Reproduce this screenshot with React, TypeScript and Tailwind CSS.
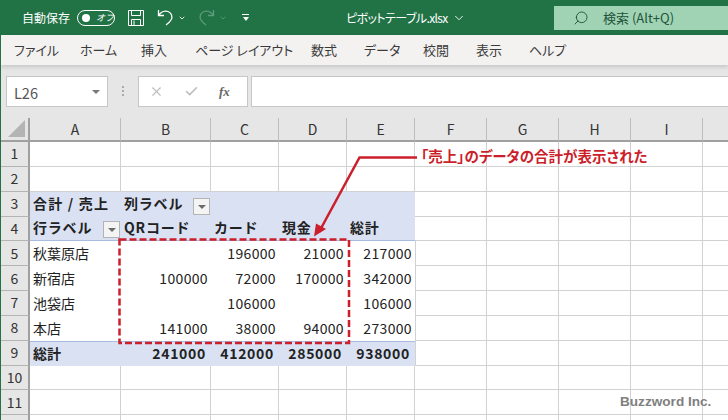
import { ChevronDown, Search, X, Check } from "lucide-react";

const FONT = "font-['Noto_Sans_CJK_JP','Noto_Sans',sans-serif]";

const COLUMNS = ["A", "B", "C", "D", "E", "F", "G", "H", "I", ""];
const TABS = [
  { label: "ファイル", width: "w-[66px]" },
  { label: "ホーム", width: "w-[61px]" },
  { label: "挿入", width: "w-[54px]" },
  { label: "ページ レイアウト", width: "w-[116px]" },
  { label: "数式", width: "w-[53px]" },
  { label: "データ", width: "w-[59px]" },
  { label: "校閲", width: "w-[53px]" },
  { label: "表示", width: "w-[53px]" },
  { label: "ヘルプ", width: "w-[50px]" },
];

type Row = { a?: string; values?: string[]; kind?: "plain" | "head" | "total" };

const ROWS: Row[] = [
  {},
  {},
  { kind: "head" },
  { kind: "head" },
  { a: "秋葉原店", values: ["", "196000", "21000", "217000"], kind: "plain" },
  { a: "新宿店", values: ["100000", "72000", "170000", "342000"], kind: "plain" },
  { a: "池袋店", values: ["", "106000", "", "106000"], kind: "plain" },
  { a: "本店", values: ["141000", "38000", "94000", "273000"], kind: "plain" },
  { a: "総計", values: ["241000", "412000", "285000", "938000"], kind: "total" },
  {},
  {},
  {},
];

function FilterButton() {
  return (
    <span className="mr-px flex h-[17px] w-[17px] shrink-0 items-center justify-center self-end border border-[#b4b4b4] bg-[#f4f4f4]">
      <span className="mt-px h-0 w-0 border-x-[4px] border-t-[4px] border-x-transparent border-t-[#6a6a6a]" />
    </span>
  );
}

function TitleBar() {
  return (
    <header className="flex h-[35px] shrink-0 items-center bg-[#217346] text-white">
      <span className="ml-[21px] text-[12px]">自動保存</span>
      <span className="ml-[7px] flex h-[16px] w-[38px] items-center rounded-full border border-white pl-[4px]">
        <span className="h-[8px] w-[8px] rounded-full bg-white" />
        <span className="ml-[6px] text-[9px] italic leading-none">オフ</span>
      </span>
      <svg className="ml-[13px]" width="16" height="16" viewBox="0 0 16 16" fill="none" stroke="#fff" strokeWidth="1">
        <path d="M.5.5h15v15H.5zM3.500.5v5h9v-5M3.500 15.500v-6h9v6M6 10.500v5" />
      </svg>
      <svg className="ml-[13px]" width="17" height="17" viewBox="0 0 17 17" fill="none" stroke="#fff" strokeWidth="1.300">
        <path d="M1.500 1v5.500H7M1.800 6.200C4 2.500 8 1.500 11 2.500c3.500 1.200 5 5.500 3 8.500-1 1.700-3 3.500-5 5" />
      </svg>
      <ChevronDown className="ml-[4px]" size={8} strokeWidth={2.5} />
      <svg className="ml-[12px]" width="17" height="17" viewBox="0 0 17 17" fill="none" stroke="#5d9c7b" strokeWidth="1.300">
        <path d="M15.500 1v5.500H10M15.200 6.200C13 2.500 9 1.500 6 2.500 2.500 3.700 1 8 3 11c1 1.700 3 3.500 5 5" />
      </svg>
      <ChevronDown className="ml-[4px] text-[#5d9c7b]" size={8} strokeWidth={2.5} />
      <span className="ml-[15px] flex flex-col items-center gap-[2px]">
        <span className="h-px w-[7px] bg-white" />
        <span className="h-0 w-0 border-x-[3.500px] border-t-[4px] border-x-transparent border-t-white" />
      </span>
      <div className="ml-[97px] flex w-[208px] items-center">
        <span className="whitespace-nowrap text-[12px] tracking-[-0.6px] [font-feature-settings:'palt']">ピボットテーブル.xlsx</span>
        <ChevronDown className="ml-[4px]" size={14} strokeWidth={1.5} />
      </div>
      <div className="mt-[6px] flex h-[24px] flex-1 items-center self-start bg-[#9fd3b3] pl-[19px] text-[#23543a]">
        <Search className="-scale-x-100" size={16} strokeWidth={1.4} />
        <span className="ml-[14px] text-[13px]">検索 (Alt+Q)</span>
      </div>
    </header>
  );
}

function MenuBar() {
  return (
    <nav className="relative flex h-[30px] shrink-0 items-center bg-[#f3f2f1] pl-[13px] text-[13px] text-[#3b3b3b] shadow-[0_2px_4px_rgba(0,0,0,0.14)] [font-feature-settings:'palt']">
      {TABS.map((tab) => (
        <span key={tab.label} className={`${tab.width} whitespace-nowrap`}>
          {tab.label}
        </span>
      ))}
    </nav>
  );
}

function FormulaBar() {
  return (
    <div className="flex h-[53px] shrink-0 items-start bg-[#e6e6e6] pt-[11px]">
      <div className="ml-[5px] flex h-[31px] w-[102px] items-center justify-between border border-[#c6c6c6] bg-white pl-[7px] pr-[7px] text-[14.500px] text-[#555]">
        <span className="mt-[3px]">L26</span>
        <span className="h-0 w-0 border-x-[4px] border-t-[4px] border-x-transparent border-t-[#777]" />
      </div>
      <div className="ml-[14px] mr-[14px] mt-[10px] flex flex-col gap-[2px]">
        <span className="h-[2px] w-[2px] bg-[#aaa]" />
        <span className="h-[2px] w-[2px] bg-[#aaa]" />
        <span className="h-[2px] w-[2px] bg-[#aaa]" />
      </div>
      <div className="flex h-[31px] w-[110px] items-center border border-[#c6c6c6] bg-white pl-[10px] text-[#bdbdbd]">
        <X size={15} strokeWidth={1.8} />
        <Check className="ml-[20px]" size={15} strokeWidth={2.5} />
        <span className="ml-[20px] font-['Liberation_Serif',serif] text-[13px] font-bold italic text-[#666]">fx</span>
      </div>
      <div className="ml-[3px] h-[31px] flex-1 border border-r-0 border-[#c6c6c6] bg-white" />
    </div>
  );
}

function Sheet() {
  return (
    <div className="grid flex-1 grid-cols-[29px_91px_90px_68px_68px_68px_72px_72px_72px_72px_26px] grid-rows-[24px_repeat(12,24.850px)] overflow-hidden bg-white text-[14px] text-[#222]">
      <div className="flex items-end justify-end border-b-2 border-r-2 border-[#a0a0a0] bg-[#e6e6e6] p-[3px]">
        <span className="h-0 w-0 border-b-[17px] border-l-[17px] border-b-[#b4b4b4] border-l-transparent" />
      </div>
      {COLUMNS.map((col, i) => (
        <div key={i} className="flex items-center justify-center border-b-2 border-r border-b-[#a0a0a0] border-r-[#bdbdbd] bg-[#e6e6e6] text-[#333]">
          {col}
        </div>
      ))}
      {ROWS.map((row, r) => (
        <SheetRow key={r} row={row} n={r + 1} />
      ))}
    </div>
  );
}

const HEAD_CELL = "flex items-center justify-between whitespace-nowrap bg-[#d9e1f2] pl-[3px] pb-[2px] font-bold tracking-[0.8px]";

function SheetRow({ row, n }: { row: Row; n: number }) {
  const blank = "border-b border-r border-[#d2d2d2]";
  const rest = [0, 1, 2, 3, 4].map((i) => <div key={i} className={blank} />);
  const header = (
    <div className="flex items-center justify-center border-b border-r-2 border-b-[#b4b4b4] border-r-[#a0a0a0] bg-[#e6e6e6] text-[#333]">
      {n < 12 ? n : ""}
    </div>
  );

  if (n === 3 || n === 4) {
    const line = n === 4 ? "border-b border-[#a9bce0]" : "";
    return (
      <>
        {header}
        {n === 3 ? (
          <>
            <div className={`${HEAD_CELL} ${line}`}>
              <span className="tracking-[1.2px]">合計 / 売上</span>
            </div>
            <div className={`${HEAD_CELL} ${line}`}>
              列ラベル
              <FilterButton />
            </div>
            <div className={`${HEAD_CELL} ${line}`} />
            <div className={`${HEAD_CELL} ${line}`} />
            <div className={`${HEAD_CELL} ${line}`} />
          </>
        ) : (
          <>
            <div className={`${HEAD_CELL} ${line}`}>
              行ラベル
              <FilterButton />
            </div>
            <div className={`${HEAD_CELL} ${line}`}>QRコード</div>
            <div className={`${HEAD_CELL} ${line}`}>カード</div>
            <div className={`${HEAD_CELL} ${line}`}>現金</div>
            <div className={`${HEAD_CELL} ${line}`}>総計</div>
          </>
        )}
        {rest}
      </>
    );
  }

  if (row.kind === "plain" || row.kind === "total") {
    const total = row.kind === "total";
    const cell = total ? "bg-[#d9e1f2] border-t border-[#a9bce0] font-bold" : "";
    const num = total ? "pr-[5px] tracking-[0.7px]" : "pr-[3px] tracking-[0.35px]";
    return (
      <>
        {header}
        <div className={`flex items-center pl-[3px] ${cell}`}>{row.a}</div>
        {row.values?.map((v, i) => (
          <div key={i} className={`flex items-center justify-end ${num} ${cell}`}>
            {v}
          </div>
        ))}
        <div className="border-b border-l border-r border-[#d2d2d2]" />
        {rest.slice(1)}
      </>
    );
  }

  return (
    <>
      {header}
      <div className={blank} />
      <div className={blank} />
      <div className={blank} />
      <div className={blank} />
      <div className={blank} />
      {rest}
    </>
  );
}

function Annotation() {
  return (
    <>
      <svg className="absolute left-0 top-0" width="728" height="420" fill="none">
        <rect x="118.500" y="239.500" width="229.500" height="103.500" stroke="#cb1f2b" strokeWidth="2.500" strokeDasharray="7 3" />
        <path d="M416 157.500H358.500L318 232" stroke="#cb1f2b" strokeWidth="2.500" />
        <path d="M313 236.500l2-13 10 5.500z" fill="#cb1f2b" />
      </svg>
      <span className="absolute left-[420px] top-[145px] whitespace-nowrap text-[14.500px] font-bold leading-[22px] text-[#cb1f2b] [font-feature-settings:'palt']">
        「売上」のデータの合計が表示された
      </span>
      <span className="absolute left-[619px] top-[393px] font-['Liberation_Sans',sans-serif] text-[13.600px] font-bold leading-[18px] text-[#7f7f7f]">
        Buzzword Inc.
      </span>
    </>
  );
}

export default function App() {
  return (
    <div className={`relative flex h-[420px] w-[728px] flex-col overflow-hidden border-l border-[#217346] ${FONT}`}>
      <TitleBar />
      <MenuBar />
      <FormulaBar />
      <Sheet />
      <Annotation />
    </div>
  );
}
